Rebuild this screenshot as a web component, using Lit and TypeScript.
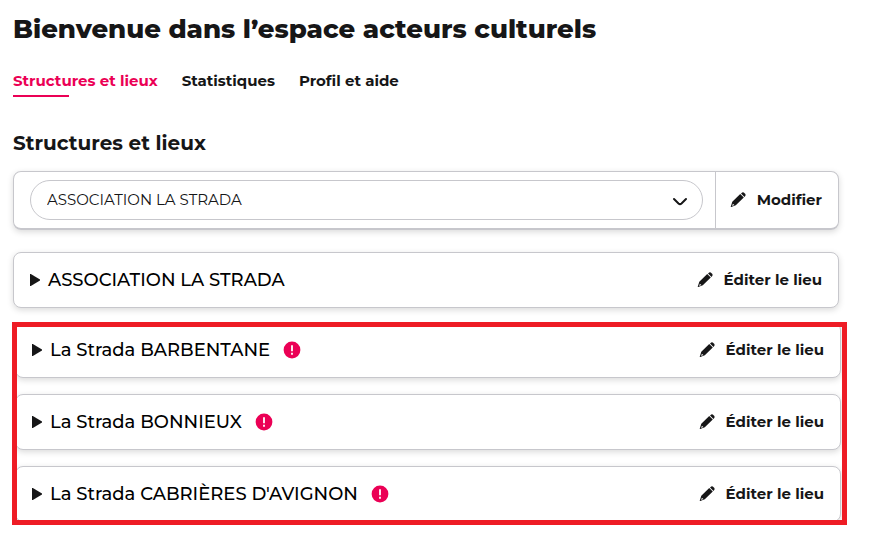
import { LitElement, html, css, svg, nothing } from "lit";
import { customElement, property, state } from "lit/decorators.js";
import { classMap } from "lit/directives/class-map.js";

const pencil = html`<svg width="16" height="16" viewBox="0 0 16 16" aria-hidden="true">
  ${svg`<path fill="currentColor" fill-rule="evenodd" d="M10.2 2.1 13.8 5.6 5.8 13.2 1.3 14.9Q.5 15.2.8 14.4L2.3 9.7ZM2.9 11.7 2.1 13.9 4.3 13.1Z"/>
  <path fill="currentColor" d="M11 1.5 12.2.6Q13.3 0 14.3.9L15.1 1.7Q16 2.8 15.4 3.8L14.5 4.9Z"/>`}
</svg>`;

@customElement("edit-button")
export class EditButton extends LitElement {
  @property() label = "";

  static styles = css`
    :host { display: flex; }
    button {
      display: flex;
      align-items: center;
      gap: 11px;
      padding: 0;
      border: 0;
      background: none;
      color: #161617;
      font: 700 15px/20px Montserrat, Inter, sans-serif;
      white-space: nowrap;
      cursor: pointer;
    }
  `;

  render() {
    return html`<button type="button">${pencil}<span>${this.label}</span></button>`;
  }
}

@customElement("venue-card")
export class VenueCard extends LitElement {
  @property() name = "";
  @property({ type: Boolean }) alert = false;
  @state() private open = false;

  static styles = css`
    :host {
      display: flex;
      align-items: center;
      justify-content: space-between;
      box-sizing: border-box;
      min-height: 56px;
      padding: 0 16px;
      border: 1px solid #c7c7cc;
      border-radius: 8px;
      background: #fff;
      box-shadow: 0 2px 6px rgba(0, 0, 0, 0.15);
    }
    .toggle {
      display: flex;
      align-items: center;
      gap: 8px;
      padding: 0;
      border: 0;
      background: none;
      color: #000;
      font: 500 18px/24px Montserrat, Inter, sans-serif;
      text-align: left;
      cursor: pointer;
    }
    .open .arrow { transform: rotate(90deg); }
    .arrow { color: #161617; }
    .alert { margin-left: 5px; }
  `;

  render() {
    return html`
      <button
        type="button"
        class=${classMap({ toggle: true, open: this.open })}
        aria-expanded=${this.open ? "true" : "false"}
        @click=${() => (this.open = !this.open)}
      >
        <svg class="arrow" width="10" height="12" viewBox="0 0 10 12" aria-hidden="true">
          <path fill="currentColor" d="M0 0H.8L10 5.5V6.5L.8 12H0Z" />
        </svg>
        <span>${this.name}</span>
        ${this.alert
          ? html`<svg class="alert" width="18" height="18" viewBox="0 0 18 18" role="img" aria-label="Attention">
              <circle cx="9" cy="9" r="8.4" fill="#eb0055" />
              <path stroke="#fff" stroke-width="1.8" d="M9 4.2V10.3M9 11.8V13.7" />
            </svg>`
          : nothing}
      </button>
      <edit-button label="Éditer le lieu"></edit-button>
    `;
  }
}

@customElement("app-root")
export class AppRoot extends LitElement {
  @state() private tab = 0;

  private tabs = ["Structures et lieux", "Statistiques", "Profil et aide"];
  private venues = ["La Strada BARBENTANE", "La Strada BONNIEUX", "La Strada CABRIÈRES D'AVIGNON"];

  static styles = css`
    :host {
      display: block;
      padding: 12px 37px 12px 13px;
      background: #fff;
      color: #161617;
      font-family: Montserrat, Inter, sans-serif;
    }
    h1 { margin: 0; font-size: 26px; line-height: 34px; font-weight: 800; }
    h2 { margin: 34px 0 16px; font-size: 20px; line-height: 24px; font-weight: 700; }
    .tabs { display: flex; gap: 24px; margin-top: 24px; }
    .tab {
      padding-bottom: 5px;
      color: #161617;
      font-size: 15px;
      line-height: 22px;
      font-weight: 700;
      text-decoration: none;
    }
    .tab.active { color: #eb0055; }
    .tab.active::after {
      content: "";
      display: block;
      width: 56px;
      height: 2px;
      margin: 3px 0 -5px;
      background: #eb0055;
    }
    .picker {
      display: flex;
      margin-bottom: 22px;
      border: 1px solid #c7c7cc;
      border-bottom-width: 2px;
      border-radius: 8px;
      box-shadow: 0 2px 6px rgba(0, 0, 0, 0.15);
    }
    .field { position: relative; flex: 1; padding: 8px 12px 8px 16px; }
    select {
      display: block;
      width: 100%;
      height: 40px;
      padding: 0 40px 0 16px;
      border: 1px solid #c7c7cc;
      border-radius: 20px;
      appearance: none;
      background: #fff;
      color: #161617;
      font: 400 15px/20px Montserrat, Inter, sans-serif;
    }
    .chevron { position: absolute; right: 27px; top: 25px; pointer-events: none; }
    .edit { display: flex; align-items: center; padding: 0 16px 0 14px; border-left: 1px solid #c7c7cc; }
    .frame { margin: 14px -8px 0 -1px; border: 5px solid #ee1c25; overflow: hidden; }
    .list { display: flex; flex-direction: column; gap: 16px; margin: -5px 1px -2px -2px; }
  `;

  render() {
    return html`
      <h1>Bienvenue dans l’espace acteurs culturels</h1>
      <nav class="tabs">
        ${this.tabs.map(
          (label, i) => html`<a
            href="#"
            class=${classMap({ tab: true, active: i === this.tab })}
            @click=${(e: Event) => {
              e.preventDefault();
              this.tab = i;
            }}
            >${label}</a
          >`,
        )}
      </nav>
      <h2>Structures et lieux</h2>
      <div class="picker">
        <div class="field">
          <select aria-label="Structure">
            <option>ASSOCIATION LA STRADA</option>
          </select>
          <svg class="chevron" width="16" height="10" viewBox="0 0 16 10" aria-hidden="true">
            <path d="M2 2 6.5 6.5Q8 7.8 9.5 6.5L14 2" fill="none" stroke="#161617" stroke-width="2" stroke-linecap="round" />
          </svg>
        </div>
        <div class="edit"><edit-button label="Modifier"></edit-button></div>
      </div>
      <venue-card name="ASSOCIATION LA STRADA"></venue-card>
      <div class="frame">
        <div class="list">
          ${this.venues.map((name) => html`<venue-card .name=${name} alert></venue-card>`)}
        </div>
      </div>
    `;
  }
}
